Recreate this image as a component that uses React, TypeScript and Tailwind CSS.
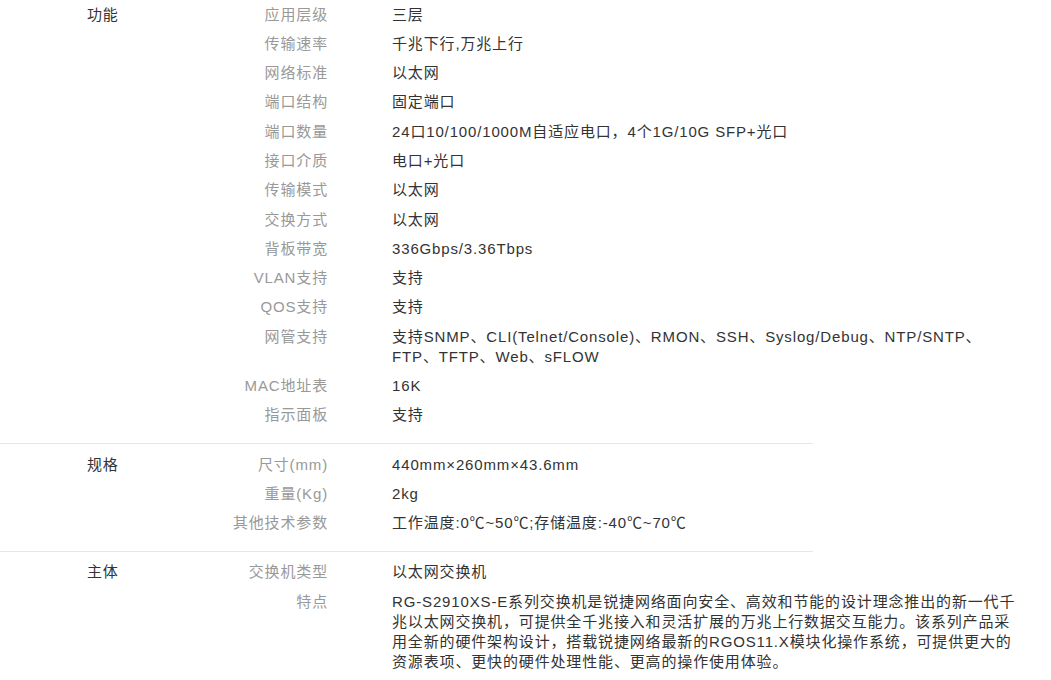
type Row = { k: string; v: string[] };
type Group = { title: string; rows: Row[] };

const groups: Group[] = [
  {
    title: "功能",
    rows: [
      { k: "应用层级", v: ["三层"] },
      { k: "传输速率", v: ["千兆下行,万兆上行"] },
      { k: "网络标准", v: ["以太网"] },
      { k: "端口结构", v: ["固定端口"] },
      { k: "端口数量", v: ["24口10/100/1000M自适应电口，4个1G/10G SFP+光口"] },
      { k: "接口介质", v: ["电口+光口"] },
      { k: "传输模式", v: ["以太网"] },
      { k: "交换方式", v: ["以太网"] },
      { k: "背板带宽", v: ["336Gbps/3.36Tbps"] },
      { k: "VLAN支持", v: ["支持"] },
      { k: "QOS支持", v: ["支持"] },
      {
        k: "网管支持",
        v: [
          "支持SNMP、CLI(Telnet/Console)、RMON、SSH、Syslog/Debug、NTP/SNTP、",
          "FTP、TFTP、Web、sFLOW",
        ],
      },
      { k: "MAC地址表", v: ["16K"] },
      { k: "指示面板", v: ["支持"] },
    ],
  },
  {
    title: "规格",
    rows: [
      { k: "尺寸(mm)", v: ["440mm×260mm×43.6mm"] },
      { k: "重量(Kg)", v: ["2kg"] },
      { k: "其他技术参数", v: ["工作温度:0℃~50℃;存储温度:-40℃~70℃"] },
    ],
  },
  {
    title: "主体",
    rows: [
      { k: "交换机类型", v: ["以太网交换机"] },
      {
        k: "特点",
        v: [
          "RG-S2910XS-E系列交换机是锐捷网络面向安全、高效和节能的设计理念推出的新一代千",
          "兆以太网交换机，可提供全千兆接入和灵活扩展的万兆上行数据交互能力。该系列产品采",
          "用全新的硬件架构设计，搭载锐捷网络最新的RGOS11.X模块化操作系统，可提供更大的",
          "资源表项、更快的硬件处理性能、更高的操作使用体验。",
        ],
      },
    ],
  },
];

const App = () => {
  return (
    <div className="min-h-screen bg-white font-['Liberation_Sans','Noto_Sans_CJK_SC',sans-serif] text-[15px] leading-[20px] tracking-[0.85px]">
      {groups.map((g, gi) => (
        <div
          key={g.title}
          className={
            "flex w-[813px] pb-[13px] " +
            (gi === 0 ? "pt-0 " : "pt-[6px] ") +
            (gi < groups.length - 1 ? "border-b border-[#e6e6e6]" : "")
          }
        >
          {/* 分组名 */}
          <div className="w-[200px] shrink-0 pl-[87px] py-[4.65px] text-[#333]">
            {g.title}
          </div>
          {/* 参数 */}
          <div className="flex flex-col">
            {g.rows.map((r) => (
              <div key={r.k} className="flex py-[4.65px]">
                <div className="w-[128px] shrink-0 text-right text-[#999]">
                  {r.k}
                </div>
                <div className="ml-[64px] w-[640px] shrink-0 whitespace-nowrap text-[#333]">
                  {r.v.map((line) => (
                    <div key={line}>{line}</div>
                  ))}
                </div>
              </div>
            ))}
          </div>
        </div>
      ))}
    </div>
  );
};

export default App;
